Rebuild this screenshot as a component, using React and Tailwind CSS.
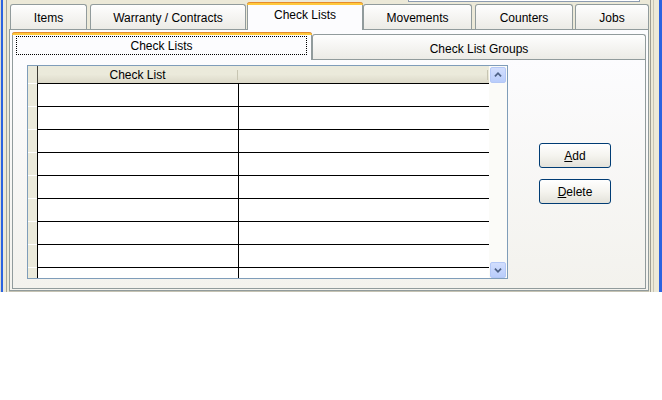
import React from "react";

function Chevron({ up }) {
  return (
    <svg width="16" height="16" viewBox="0 0 16 16">
      <path
        d={up ? "M4.5 9.5 L8 6 L11.5 9.5" : "M4.5 6.5 L8 10 L11.5 6.5"}
        fill="none"
        stroke="#4d6185"
        strokeWidth="2"
      />
    </svg>
  );
}

function Row({ h }) {
  const last = h === "last";
  return (
    <div className={last ? "flex h-[10px]" : "flex h-[23px]"}>
      <div className={last ? "w-[9px] bg-[#ebeadb]" : "w-[9px] bg-[#ebeadb] border-b border-white"} />
      <div className="w-[1px] bg-black" />
      <div className={last ? "w-[201px] border-r border-black" : "w-[201px] border-r border-b border-black"} />
      <div className={last ? "w-[250px]" : "w-[250px] border-b border-black"} />
    </div>
  );
}

export default function App() {
  return (
    <div className="w-[662px] h-[400px] bg-white overflow-hidden font-['Liberation_Sans',Arial,sans-serif] text-[12px] text-black leading-none">
      <div className="flex h-[292px] bg-[#ece9d8]">
        {/* left frame */}
        <div className="flex w-[9px] h-full">
          <div className="w-[1px] bg-[#dcdad0]" />
          <div className="w-[2px] bg-[#2b63e0]" />
          <div className="w-[3px] bg-[#ece9d8]" />
          <div className="w-[1px] bg-[#a7a69a]" />
          <div className="w-[2px] bg-[#ece9d8]" />
        </div>

        {/* main */}
        <div className="w-[640px] flex flex-col">
          <div className="h-[2px] flex">
            <div className="ml-[399px] w-[232px] h-[2px] border-x border-b border-[#8c9bb0] bg-white" />
          </div>

          {/* outer tabs */}
          <div className="h-[27px] flex items-end">
            <div className="ml-[1px] w-[77px] h-[25px] border border-b-0 border-[#919b9c] rounded-t-[3px] bg-gradient-to-b from-[#fefefe] to-[#ecebe6] flex items-center justify-center pt-[1px]">
              Items
            </div>
            <div className="ml-[3px] w-[156px] h-[25px] border border-b-0 border-[#919b9c] rounded-t-[3px] bg-gradient-to-b from-[#fefefe] to-[#ecebe6] flex items-center justify-center pt-[1px]">
              Warranty / Contracts
            </div>
            <div className="ml-[1px] w-[116px] h-[28px] -mb-[1px] relative z-10 border-x border-[#919b9c] rounded-t-[3px] bg-[#fcfcfe] flex flex-col">
              <div className="h-[3px] -mx-[1px] bg-[#ffc83c] border-t border-[#e68b2c] rounded-t-[3px]" />
              <div className="flex-1 flex items-center justify-center pb-[5px]">Check Lists</div>
            </div>
            <div className="w-[109px] h-[25px] border border-b-0 border-[#919b9c] rounded-t-[3px] bg-gradient-to-b from-[#fefefe] to-[#ecebe6] flex items-center justify-center pt-[1px]">
              Movements
            </div>
            <div className="ml-[3px] w-[98px] h-[25px] border border-b-0 border-[#919b9c] rounded-t-[3px] bg-gradient-to-b from-[#fefefe] to-[#ecebe6] flex items-center justify-center pt-[1px]">
              Counters
            </div>
            <div className="ml-[2px] w-[74px] h-[25px] border border-b-0 border-[#919b9c] rounded-t-[3px] bg-gradient-to-b from-[#fefefe] to-[#ecebe6] flex items-center justify-center pt-[1px]">
              Jobs
            </div>
          </div>

          {/* outer panel */}
          <div className="border border-[#919b9c] px-[2px] pb-[1px] bg-gradient-to-b from-[#fcfcfe] to-[#f4f3ee] flex flex-col">
            {/* inner tabs */}
            <div className="h-[29px] flex items-end">
              <div className="w-[300px] h-[28px] -mb-[1px] relative z-10 border-x border-[#919b9c] rounded-t-[3px] bg-[#fcfcfe] flex flex-col">
                <div className="h-[3px] -mx-[1px] bg-[#ffc83c] border-t border-[#e68b2c] rounded-t-[3px]" />
                <div className="ml-[3px] mt-[1px] w-[291px] h-[19px] border border-dotted border-black flex items-center justify-center">
                  Check Lists
                </div>
              </div>
              <div className="w-[334px] h-[25px] border border-b-0 border-[#919b9c] rounded-t-[3px] bg-gradient-to-b from-[#fefefe] to-[#ecebe6] flex items-center justify-center pt-[3px]">
                Check List Groups
              </div>
            </div>

            {/* inner panel */}
            <div className="h-[230px] border border-[#919b9c] bg-gradient-to-b from-[#fcfcfe] to-[#f3f2ed] flex items-start pl-[14px] pt-[5px]">
              {/* grid */}
              <div className="w-[481px] h-[214px] border border-[#7f9db9] flex bg-white">
                <div className="w-[461px] flex flex-col">
                  <div className="flex h-[18px]">
                    <div className="w-[9px] bg-[#ebeadb] border-b border-white" />
                    <div className="w-[1px] bg-[#3c3b35]" />
                    <div className="w-[201px] bg-gradient-to-b from-[#ebeadb] via-[#ebeadb] to-[#dcd9c9] border-b border-black flex items-center">
                      <div className="flex-1 text-center pt-[1px]">Check List</div>
                      <div className="w-[1px] h-[10px] bg-[#c7c5b2] mr-[1px]" />
                    </div>
                    <div className="w-[250px] bg-gradient-to-b from-[#ebeadb] via-[#ebeadb] to-[#dcd9c9] border-b border-black flex items-center">
                      <div className="flex-1" />
                      <div className="w-[1px] h-[10px] bg-[#c7c5b2] mr-[1px]" />
                    </div>
                  </div>
                  <Row />
                  <Row />
                  <Row />
                  <Row />
                  <Row />
                  <Row />
                  <Row />
                  <Row />
                  <Row h="last" />
                </div>
                {/* scrollbar */}
                <div className="w-[18px] bg-[#fbfbf8] flex flex-col justify-between pt-[1px] px-[1px]">
                  <div className="w-[16px] h-[16px] rounded-[2px] border border-[#b4c8f6] bg-gradient-to-b from-[#d2defd] to-[#b9cdfb] flex items-center justify-center">
                    <Chevron up />
                  </div>
                  <div className="w-[16px] h-[16px] rounded-[2px] border border-[#b4c8f6] bg-gradient-to-b from-[#d2defd] to-[#b9cdfb] flex items-center justify-center">
                    <Chevron />
                  </div>
                </div>
              </div>

              {/* buttons */}
              <div className="ml-[31px] mt-[78px] flex flex-col gap-[11px]">
                <div className="w-[72px] h-[25px] border border-[#003c74] rounded-[3px] bg-gradient-to-b from-[#ffffff] via-[#f5f4ef] to-[#e3e2da] flex items-center justify-center">
                  <span><span className="underline">A</span>dd</span>
                </div>
                <div className="w-[72px] h-[25px] border border-[#003c74] rounded-[3px] bg-gradient-to-b from-[#ffffff] via-[#f5f4ef] to-[#e3e2da] flex items-center justify-center">
                  <span><span className="underline">D</span>elete</span>
                </div>
              </div>
            </div>
          </div>
          <div className="h-[1px] bg-[#c5c2b2]" />
        </div>

        {/* right frame */}
        <div className="flex w-[13px] h-full">
          <div className="w-[1px] bg-[#ece9d8]" />
          <div className="w-[1px] bg-[#9d9d92]" />
          <div className="w-[2px] bg-[#ece9d8]" />
          <div className="w-[1px] bg-[#c8c5b5]" />
          <div className="w-[5px] bg-[#ece9d8]" />
          <div className="w-[3px] bg-[#2b63e0]" />
        </div>
      </div>
    </div>
  );
}
